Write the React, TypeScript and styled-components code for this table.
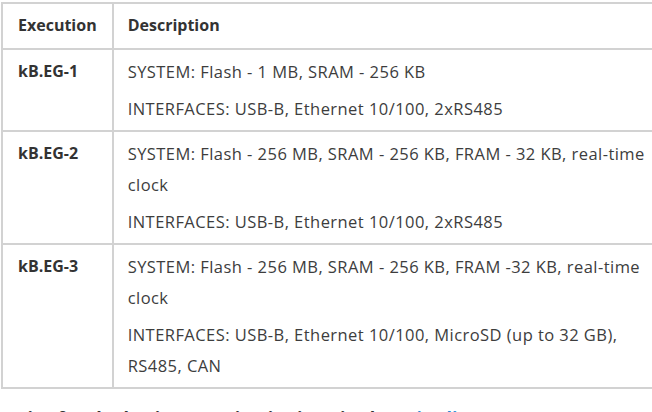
import React from "react";
import styled, { createGlobalStyle } from "styled-components";

const GlobalStyle = createGlobalStyle`
  html, body {
    margin: 0;
    padding: 0;
    background: #ffffff;
    overflow: hidden;
  }
  body {
    font-family: "Open Sans", "Noto Sans", Lato, sans-serif;
    color: #3a3a3a;
  }
`;

const Page = styled.div`
  width: 652px;
  height: 412px;
  overflow: hidden;
  padding: 2px 0 0 1px;
  box-sizing: border-box;
`;

const Table = styled.table`
  width: 690px;
  border-collapse: collapse;
  border: 2px solid #d2d2d2;
  font-size: 16px;
  line-height: 31px;
`;

const HeadCell = styled.th<{ $first?: boolean }>`
  border: 2px solid #d2d2d2;
  padding: 6px 15px 7px ${(p) => (p.$first ? "15px" : "14px")};
  text-align: left;
  font-weight: 700;
  color: #333333;
  vertical-align: top;
`;

const NameCell = styled.td`
  border: 2px solid #d2d2d2;
  padding: 6px 15px;
  width: 77px;
  font-weight: 700;
  color: #333333;
  vertical-align: top;
`;

const DescCell = styled.td`
  border: 2px solid #d2d2d2;
  padding: 6px 15px 6px 14px;
  vertical-align: top;
  color: #3d3d3d;
  font-size: 16.5px;
  letter-spacing: 0.45px;
`;

const DescInner = styled.div`
  width: 526px;
  display: flex;
  flex-direction: column;
  gap: 6px;
`;

const Para = styled.p`
  margin: 0;
`;

const Footer = styled.p`
  margin: 17px 0 0 7px;
  font-size: 18px;
  font-weight: 700;
  color: #333333;
  line-height: 24px;
  white-space: nowrap;
`;

const Link = styled.a`
  color: #2a8bd6;
  text-decoration: none;
`;

const rows = [
  {
    name: "kB.EG-1",
    lines: ["SYSTEM: Flash - 1 MB, SRAM - 256 KB", "INTERFACES: USB-B, Ethernet 10/100, 2xRS485"],
  },
  {
    name: "kB.EG-2",
    lines: [
      "SYSTEM: Flash - 256 MB, SRAM - 256 KB, FRAM - 32 KB, real-time clock",
      "INTERFACES: USB-B, Ethernet 10/100, 2xRS485",
    ],
  },
  {
    name: "kB.EG-3",
    lines: [
      "SYSTEM: Flash - 256 MB, SRAM - 256 KB, FRAM -32 KB, real-time clock",
      "INTERFACES: USB-B, Ethernet 10/100, MicroSD (up to 32 GB), RS485, CAN",
    ],
  },
];

export default function App() {
  return (
    <>
      <GlobalStyle />
      <Page>
        <Table>
          <thead>
            <tr>
              <HeadCell $first>Execution</HeadCell>
              <HeadCell>Description</HeadCell>
            </tr>
          </thead>
          <tbody>
            {rows.map((r) => (
              <tr key={r.name}>
                <NameCell>{r.name}</NameCell>
                <DescCell>
                  <DescInner>
                    {r.lines.map((l) => (
                      <Para key={l}>{l}</Para>
                    ))}
                  </DescInner>
                </DescCell>
              </tr>
            ))}
          </tbody>
        </Table>
        <Footer>
          Price for the basic execution is given in the <Link href="#">price list</Link>
        </Footer>
      </Page>
    </>
  );
}
